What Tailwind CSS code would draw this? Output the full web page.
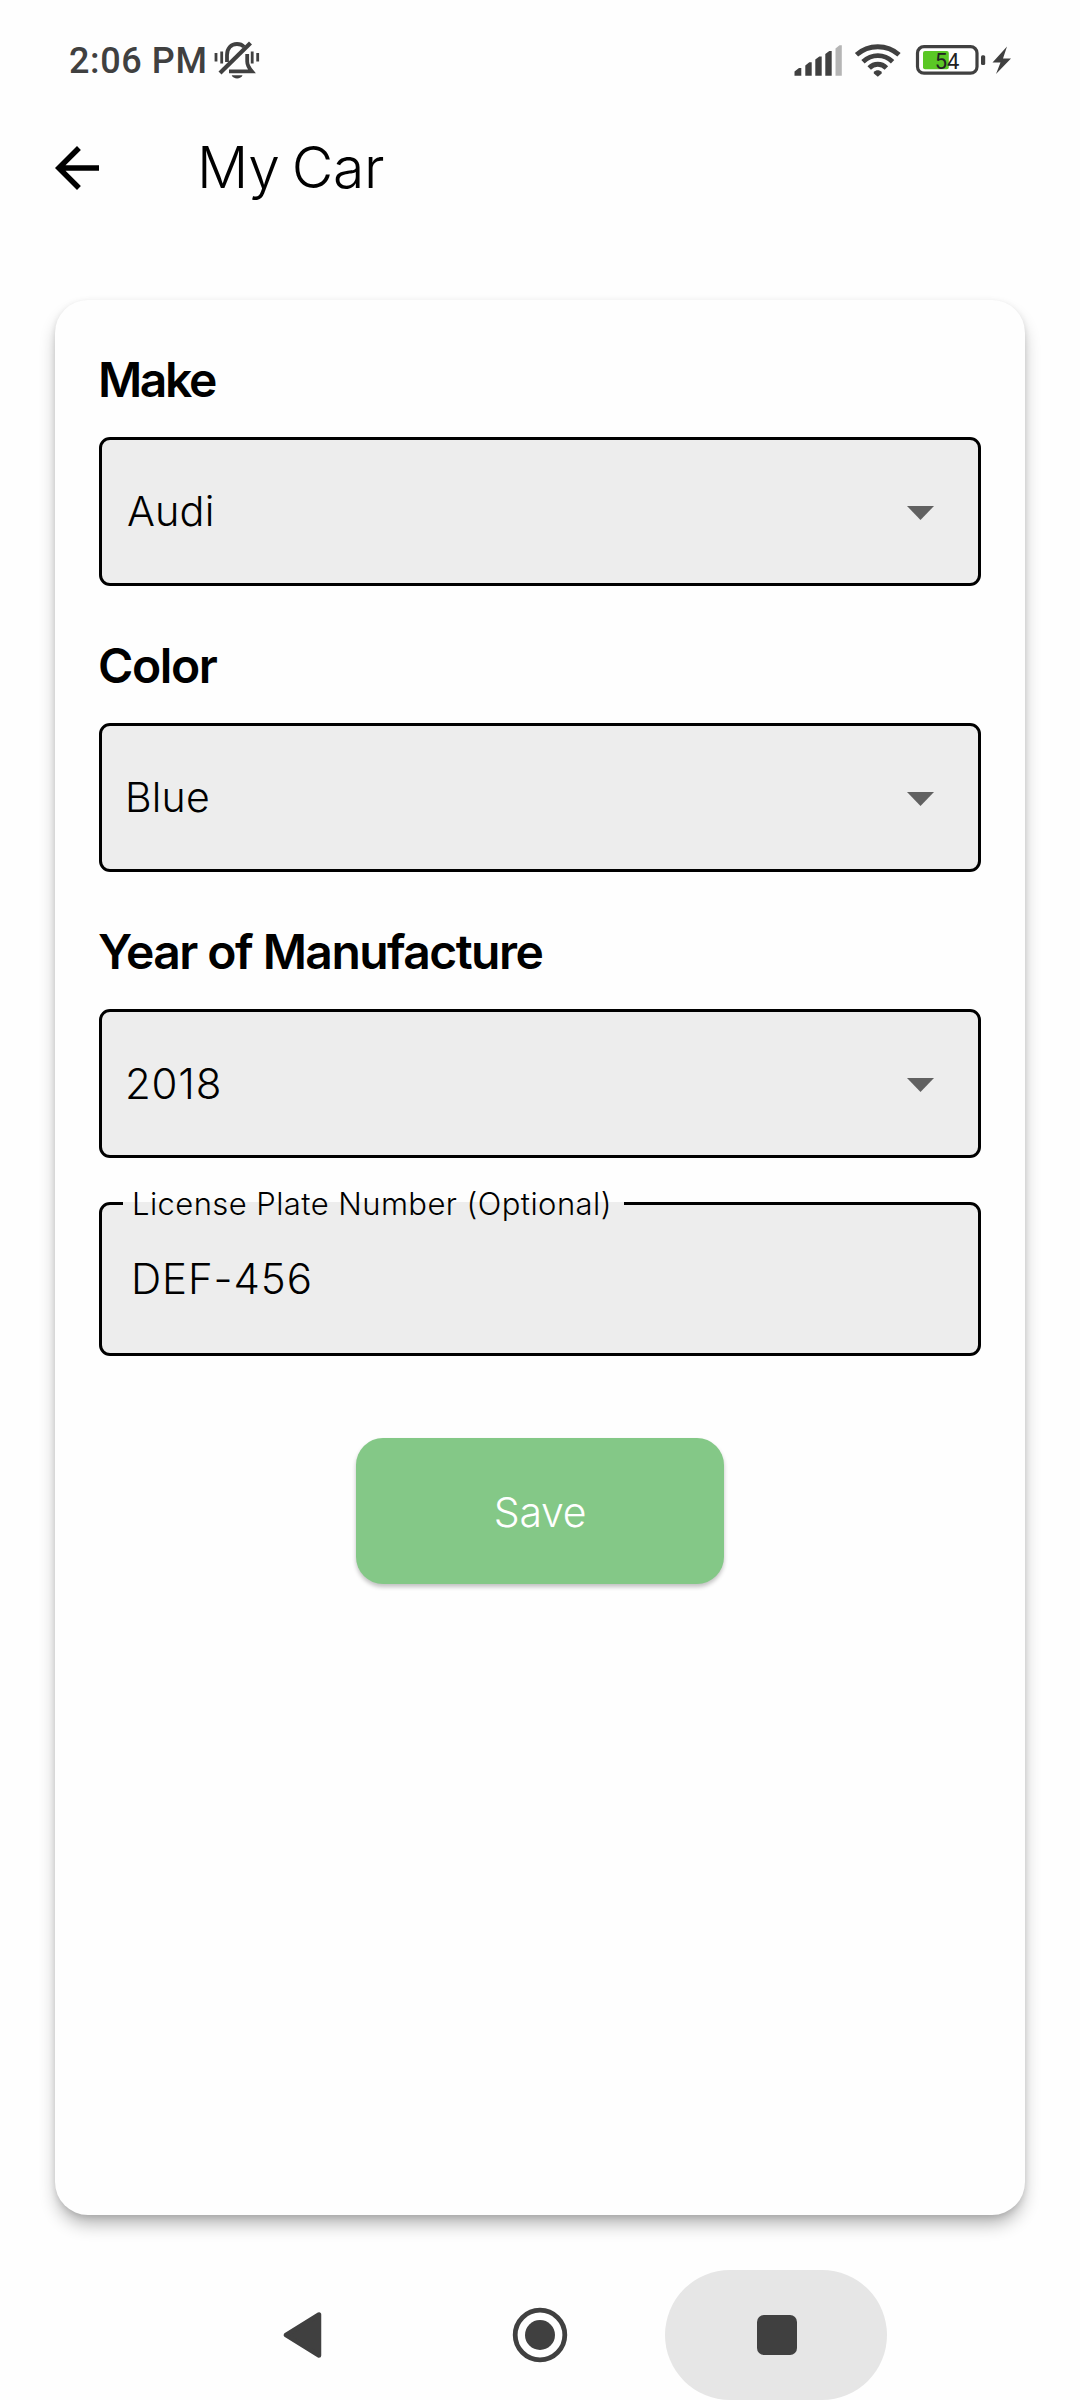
<!DOCTYPE html>
<html lang="en">
<head>
<meta charset="utf-8">
<title>My Car</title>
<script src="https://cdn.jsdelivr.net/npm/@tailwindcss/browser@4"></script>
</head>
<body class="bg-white">
<div class="flex h-[2400px] w-[1080px] flex-col overflow-hidden bg-[#fefefe] font-['Inter',sans-serif] text-black">

  <!-- Status bar -->
  <header class="flex h-[120px] items-center pl-[69px] pr-[69px] text-[#404040]">
    <span class="mt-[2px] font-['Roboto',sans-serif] text-[36px] leading-none font-medium tracking-[0.6px] whitespace-nowrap">2:06 PM</span>
    <svg class="ml-[7px] h-[39px] w-[46px] shrink-0" viewBox="214 40.5 46 39" fill="none" stroke="currentColor" stroke-width="3.8">
      <path d="M216 52.500v8.500M221.700 51v12M252.200 51v12M257.700 52.500v8.500" stroke-width="2.800"/>
      <path d="M227 61.500v-7c0-6.500 4-11 10-11 3.200 0 5.500 1.200 7 2.800"/>
      <path d="M247.200 53.500v7.500c0 4 1.800 6.500 4.600 9.800H229"/>
      <path d="M250.500 42.500 220 72.500" stroke-width="4.200"/>
      <path d="M231.700 74.800h10.800c-1.400 4.200-9.400 4.200-10.800 0z" fill="currentColor" stroke="none"/>
    </svg>
    <div class="ml-auto flex items-center">
      <svg class="h-[31px] w-[48px]" viewBox="794 44 48 31" fill="currentColor">
        <path d="M794.500 70.500 799 67h2.300v7.700h-6.800zM805.300 64.500l4-3.200h2.400v13.400h-6.400zM815.300 58.500l4-3h2.400v19.200h-6.400zM825.300 53l4-3h2.400v24.700h-6.400z"/>
        <path d="M835.500 47.500l4-3.200h2.300v30.400h-6.300z" fill="#b5b5b5"/>
      </svg>
      <svg class="ml-[12px] h-[34px] w-[48px]" viewBox="854 42 48 34" fill="none" stroke="currentColor" stroke-width="4.900">
        <path d="M856.500 53.800c12-10.800 30.500-10.800 42.500 0M863 60.800c8.800-8.200 21-8.200 29.600 0M869.200 67c5-5 12.200-5 17.200 0"/>
        <path d="M873.800 70.800c2.300-2.200 5.600-2.200 7.900 0v1.600l-3.900 3.400-4-3.400z" fill="currentColor" stroke="none"/>
      </svg>
      <svg class="ml-[13px] h-[32px] w-[71px]" viewBox="915 43 71 32">
        <rect x="917.500" y="45.600" width="59.500" height="26.600" rx="6.500" fill="#fff" stroke="currentColor" stroke-width="3.200"/>
        <rect x="923" y="50" width="25.800" height="18.300" rx="2" fill="#5ac725"/>
        <rect x="981" y="54.200" width="4.200" height="9.800" rx="1.500" fill="currentColor"/>
        <text x="934.700" y="67.700" font-family="Roboto, sans-serif" font-size="22" fill="#222">54</text>
      </svg>
      <svg class="ml-[6px] h-[29px] w-[19px]" viewBox="992 44.500 19 29" fill="currentColor">
        <path d="M1007 45 992.500 61h8l-4.500 11.500L1011 57h-8z"/>
      </svg>
    </div>
  </header>

  <!-- App bar -->
  <div class="flex h-[94px] items-center pl-[44px]">
    <svg class="mt-[2px] h-[66px] w-[66px]" viewBox="0 0 24 24"><path d="M20 11H7.830l5.590-5.590L12 4l-8 8 8 8 1.410-1.410L7.830 13H20z"/></svg>
    <h1 class="ml-[87px] text-[57px] leading-none font-light tracking-[-0.2px] [word-spacing:-4px]">My Car</h1>
  </div>

  <!-- Form card -->
  <main class="mx-[55px] mt-[86px] flex h-[1915px] shrink-0 flex-col rounded-[33px] bg-[#fefefe] px-[44px] shadow-[0_11px_18px_-3px_rgba(0,0,0,0.32),0_2px_6px_rgba(0,0,0,0.1)]">
    <section>
      <h2 class="-ml-px h-[137px] pt-[50px] text-[48px] leading-[59px] font-semibold tracking-[-2.4px]">Make</h2>
      <div class="flex h-[149px] items-center justify-between rounded-[11px] border-[3px] border-black bg-[#ededed] pr-[44px] pl-[25px]">
        <span class="text-[41.5px] leading-none font-light tracking-[0.1px]">Audi</span>
        <svg class="mt-[3px] h-[14px] w-[27px]" viewBox="0 0 27 14" fill="#616161"><path d="M0 0h27L13.500 14z"/></svg>
      </div>
    </section>
    <section>
      <h2 class="-ml-px h-[137px] pt-[50px] text-[48px] leading-[59px] font-semibold tracking-[-1.4px]">Color</h2>
      <div class="flex h-[149px] items-center justify-between rounded-[11px] border-[3px] border-black bg-[#ededed] pr-[44px] pl-[23px]">
        <span class="text-[41px] leading-none font-light tracking-[0.2px]">Blue</span>
        <svg class="mt-[3px] h-[14px] w-[27px]" viewBox="0 0 27 14" fill="#616161"><path d="M0 0h27L13.500 14z"/></svg>
      </div>
    </section>
    <section>
      <h2 class="-ml-px h-[137px] pt-[50px] text-[48px] leading-[59px] font-semibold tracking-[-1.55px] whitespace-nowrap">Year of Manufacture</h2>
      <div class="flex h-[149px] items-center justify-between rounded-[11px] border-[3px] border-black bg-[#ededed] pr-[44px] pl-[23px]">
        <span class="text-[42px] leading-none font-light tracking-[0.8px]">2018</span>
        <svg class="mt-[3px] h-[14px] w-[27px]" viewBox="0 0 27 14" fill="#616161"><path d="M0 0h27L13.500 14z"/></svg>
      </div>
    </section>
    <fieldset class="mt-[28px] h-[170px] rounded-[11px] border-[3px] border-black bg-[#ededed]">
      <legend class="ml-[21px] h-[35px] w-[501px] pl-[9px] text-[31px] leading-[35px] font-light tracking-[0.42px] whitespace-nowrap">License Plate Number (Optional)</legend>
      <div class="pl-[29px] text-[42px] leading-[115px] font-light tracking-[0.9px]">DEF-456</div>
    </fieldset>
    <button class="mx-auto mt-[82px] h-[146px] w-[368px] rounded-[27px] bg-[#84c887] pt-[3px] text-[41px] leading-none font-light tracking-[-0.3px] text-white shadow-[0_3px_4px_rgba(0,0,0,0.24)]">Save</button>
  </main>

  <!-- System navigation -->
  <nav class="mt-[55px] flex h-[130px] shrink-0 items-center text-[#404040]">
    <svg class="ml-[283px] h-[48px] w-[39px]" viewBox="0 0 39 48"><path d="M3 24 36 3.500v41z" fill="currentColor" stroke="currentColor" stroke-width="4.500" stroke-linejoin="round"/></svg>
    <svg class="ml-[190px] h-[56px] w-[56px]" viewBox="0 0 56 56"><circle cx="28" cy="28" r="24.800" fill="none" stroke="currentColor" stroke-width="4.800"/><circle cx="28" cy="28" r="15" fill="currentColor"/></svg>
    <div class="ml-[97px] flex h-[130px] w-[222px] items-center justify-center rounded-full bg-[#e6e6e6]">
      <div class="ml-px size-[40px] rounded-[7px] bg-[#404040]"></div>
    </div>
  </nav>
</div>
</body>
</html>
